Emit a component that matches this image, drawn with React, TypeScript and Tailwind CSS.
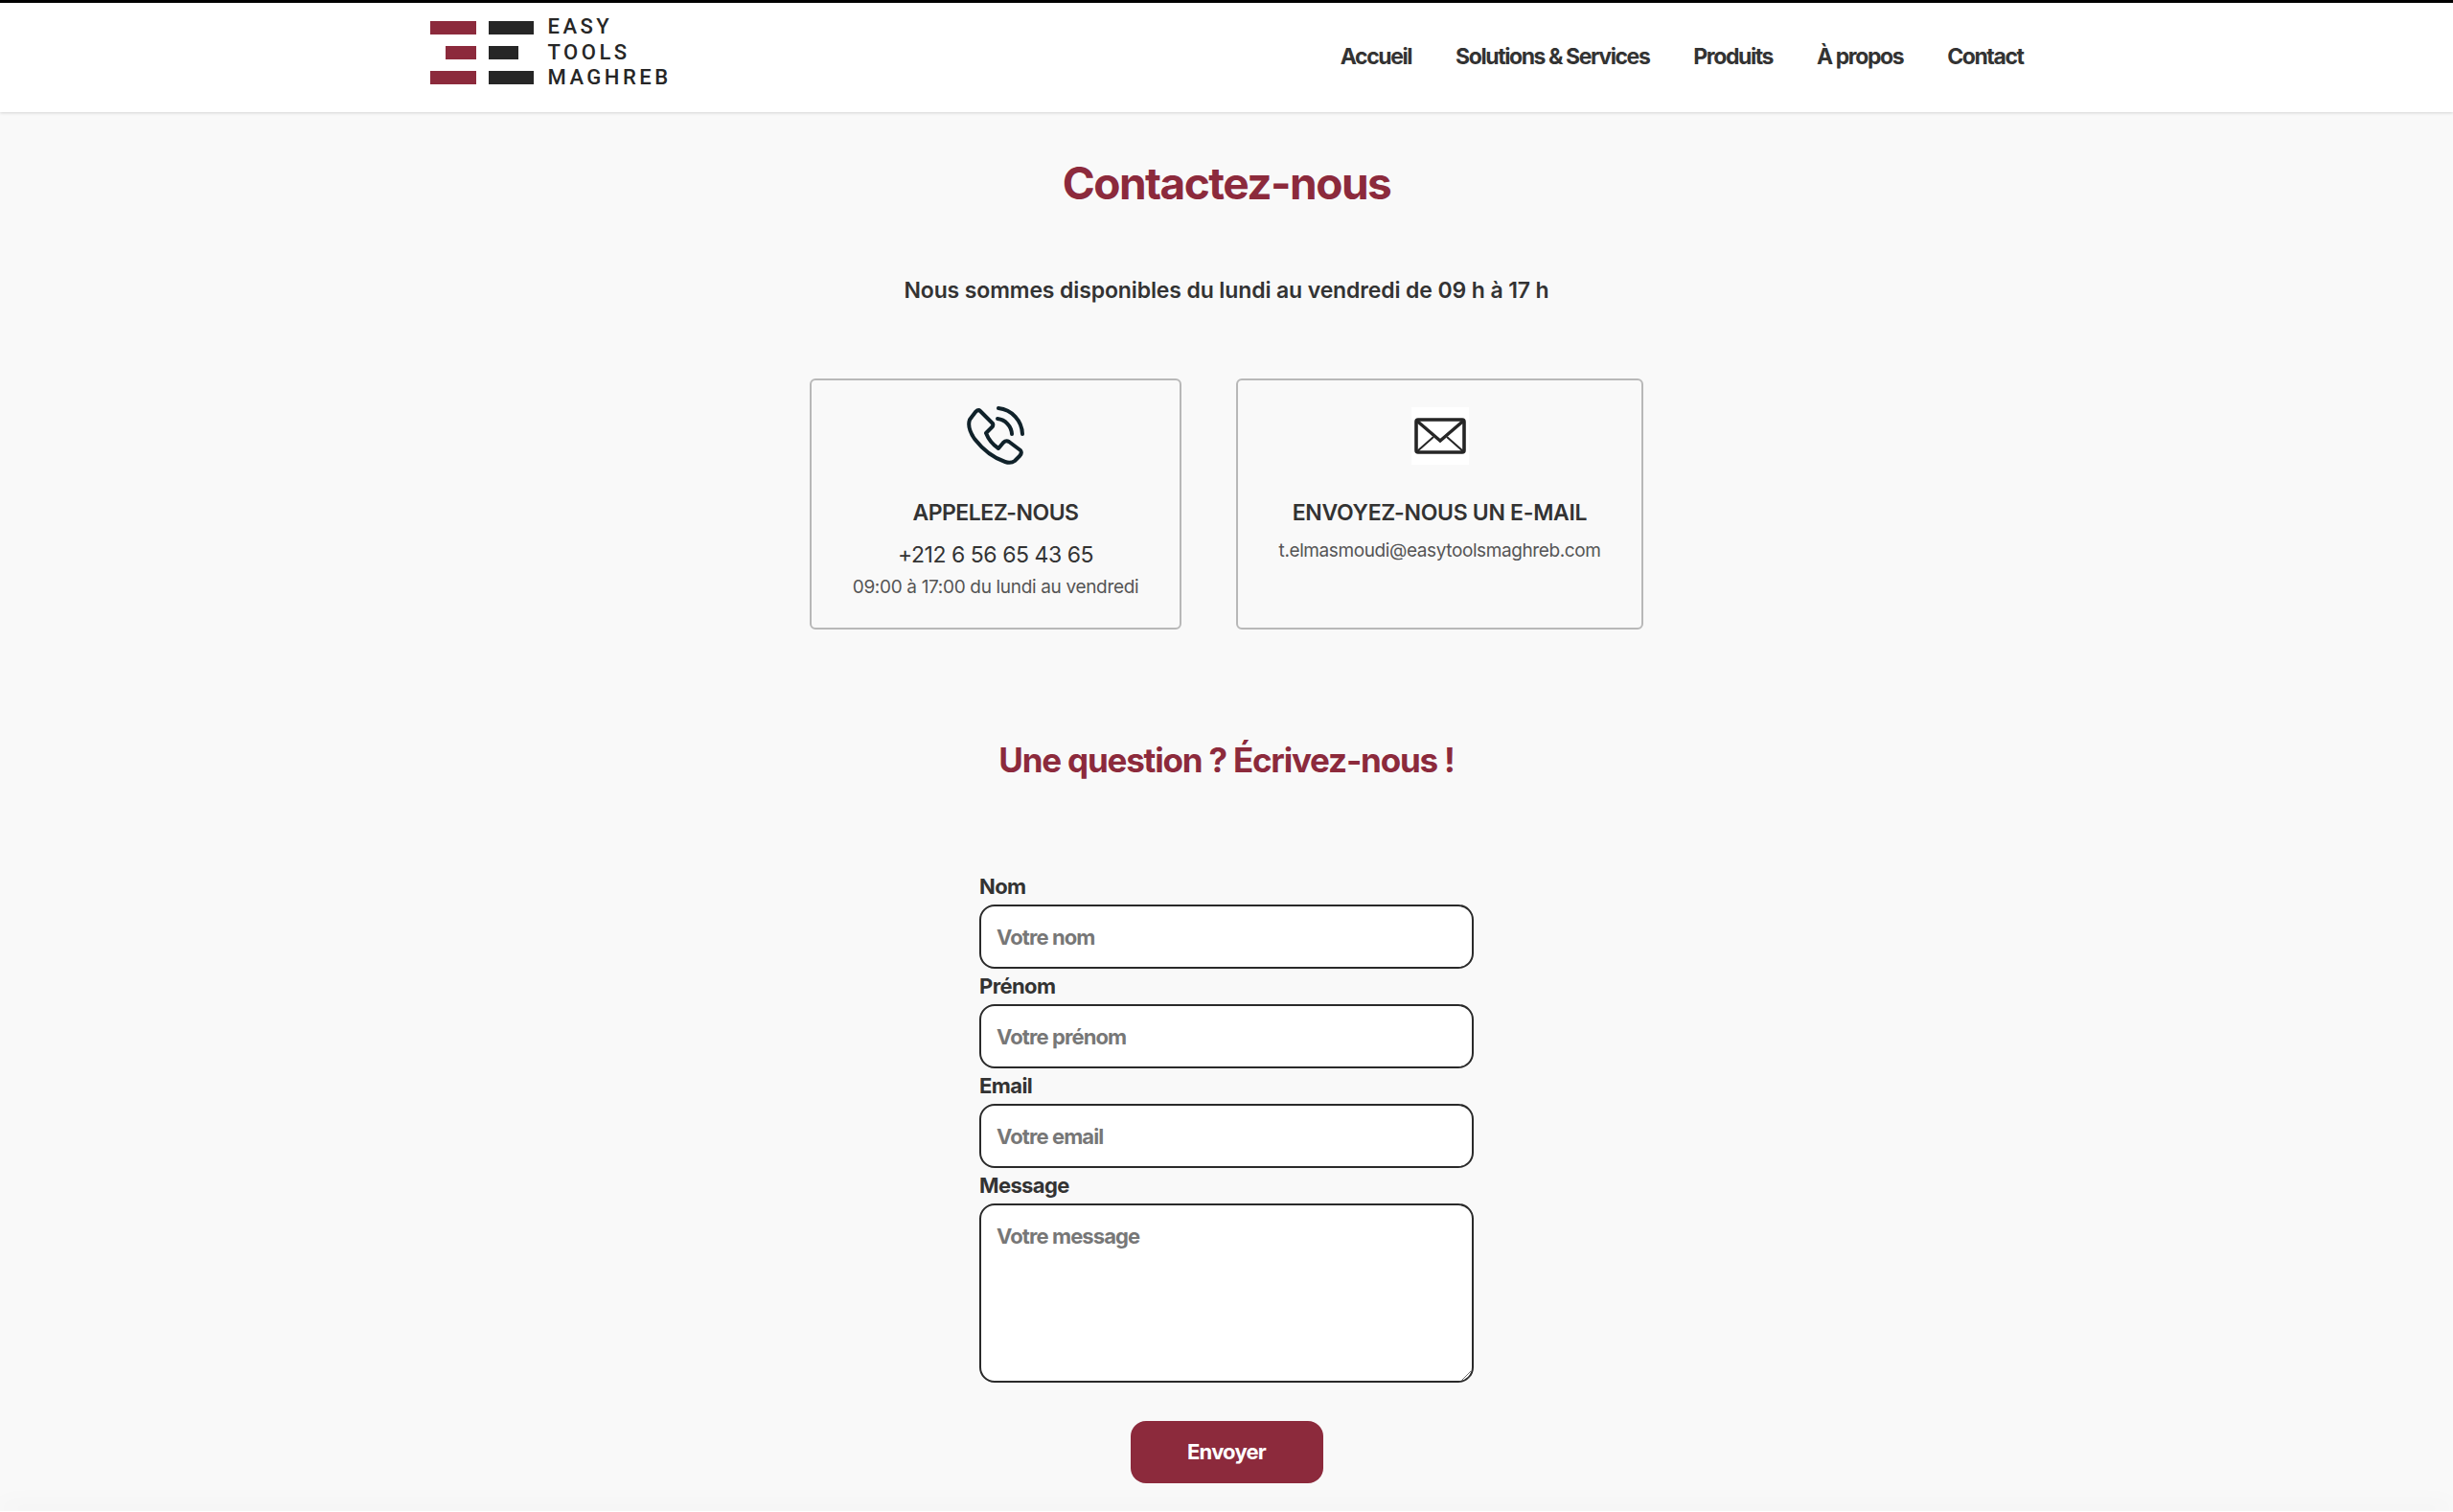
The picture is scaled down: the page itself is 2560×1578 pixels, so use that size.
const navLinks = ['Accueil', 'Solutions & Services', 'Produits', 'À propos', 'Contact'];

const fields = [
  { label: 'Nom', placeholder: 'Votre nom' },
  { label: 'Prénom', placeholder: 'Votre prénom' },
  { label: 'Email', placeholder: 'Votre email' },
];

function Logo() {
  return (
    <div className="flex items-center gap-[15px]">
      <div className="flex flex-col gap-[12px]">
        <div className="flex gap-[13px] justify-end">
          <div className="w-[48px] h-[14px] bg-[#8c2a3c]" />
          <div className="w-[47px] h-[14px] bg-[#262626]" />
        </div>
        <div className="flex gap-[13px] pl-[16px]">
          <div className="w-[32px] h-[14px] bg-[#8c2a3c]" />
          <div className="w-[31px] h-[14px] bg-[#262626]" />
        </div>
        <div className="flex gap-[13px]">
          <div className="w-[48px] h-[14px] bg-[#8c2a3c]" />
          <div className="w-[47px] h-[14px] bg-[#262626]" />
        </div>
      </div>
      <div className="flex flex-col font-['Roboto',sans-serif] font-medium text-[22px] leading-[26.5px] tracking-[3.5px] text-[#262626]">
        <span>EASY</span>
        <span>TOOLS</span>
        <span>MAGHREB</span>
      </div>
    </div>
  );
}

function PhoneIcon() {
  return (
    <svg width="60" height="61" viewBox="0 0 60 61" fill="none" stroke="#10222a" strokeWidth="4" strokeLinecap="round" strokeLinejoin="round">
      <path d="M14 5 L27 18 Q28 20 26 22 L20 28 Q24 38 33 44 L38 38 Q41 35 44 37 L56 46 Q58 49 55 52 L50 57 Q46 60 40 58 Q22 52 8 34 Q0 22 3 14 L9 6 Q12 3 14 5 Z" />
      <path d="M33 2 A28 28 0 0 1 58 29" />
      <path d="M32 13 A17 17 0 0 1 47 29" />
    </svg>
  );
}

function MailIcon() {
  return (
    <div className="w-[60px] h-[60px] bg-white flex items-center justify-center">
      <svg width="54" height="38" viewBox="0 0 54 38" fill="none" stroke="#262626">
        <rect x="2" y="2" width="50" height="34" rx="2" strokeWidth="3.6" />
        <path d="M2.5 3 L27 24 L51.5 3" strokeWidth="3.4" />
        <path d="M3 35 L20 20 M51 35 L34 20" strokeWidth="2" />
      </svg>
    </div>
  );
}

function App() {
  return (
    <div className="min-h-[1578px] bg-[#f9f9f9] font-['Inter',sans-serif] text-[#333333]">
      <header className="h-[117px] bg-white border-t-[3px] border-black shadow-[0_1px_3px_rgba(0,0,0,0.15)]">
        <div className="w-[1663px] mx-auto flex justify-between">
          <div className="pt-[12px]">
            <Logo />
          </div>
          <nav className="flex gap-[46px] pt-[41px] text-[23px] leading-[30px] font-bold tracking-[-1.42px]">
            {navLinks.map((link) => (
              <a key={link}>{link}</a>
            ))}
          </nav>
        </div>
      </header>

      <main className="flex flex-col items-center">
        <h1 className="mt-[44px] text-[46px] leading-[60px] font-bold tracking-[-1.5px] text-[#8c2a3c]">
          Contactez-nous
        </h1>
        <p className="mt-[67px] text-[23px] leading-[30px] font-semibold tracking-[-0.12px]">
          Nous sommes disponibles du lundi au vendredi de 09 h à 17 h
        </p>

        <div className="mt-[77px] flex gap-[57px]">
          <div className="w-[388px] h-[262px] rounded-[6px] border-2 border-[#b8b8b8] flex flex-col items-center pt-[27px]">
            <PhoneIcon />
            <h3 className="mt-[34px] text-[23px] leading-[32px] font-semibold tracking-[-0.5px]">APPELEZ-NOUS</h3>
            <p className="mt-[12px] text-[23px] leading-[32px] tracking-[-0.45px]">+212 6 56 65 43 65</p>
            <p className="mt-[4px] text-[19px] leading-[28px] tracking-[-0.33px] text-[#555555]">09:00 à 17:00 du lundi au vendredi</p>
          </div>
          <div className="w-[425px] h-[262px] rounded-[6px] border-2 border-[#b8b8b8] flex flex-col items-center pt-[28px]">
            <MailIcon />
            <h3 className="mt-[34px] text-[23px] leading-[32px] font-semibold tracking-[-0.3px]">ENVOYEZ-NOUS UN E-MAIL</h3>
            <p className="mt-[10px] text-[19px] leading-[28px] tracking-[-0.4px] text-[#555555]">t.elmasmoudi@easytoolsmaghreb.com</p>
          </div>
        </div>

        <h2 className="mt-[113px] text-[35px] leading-[46px] font-bold tracking-[-1.2px] text-[#8c2a3c]">
          Une question ? Écrivez-nous !
        </h2>

        <form className="mt-[91px] w-[516px] flex flex-col">
          {fields.map((field) => (
            <div key={field.label} className="flex flex-col">
              <label className="h-[37px] leading-[36px] text-[22px] font-bold tracking-[-0.6px]">{field.label}</label>
              <input
                placeholder={field.placeholder}
                className="h-[67px] rounded-[16px] border-2 border-[#2a2a2a] bg-white px-[16px] text-[22px] font-bold tracking-[-0.9px] placeholder:text-[#777777]"
              />
            </div>
          ))}
          <label className="h-[37px] leading-[36px] text-[22px] font-bold tracking-[-0.6px]">Message</label>
          <div className="relative flex">
            <textarea
              placeholder="Votre message"
              className="w-full h-[187px] rounded-[16px] border-2 border-[#2a2a2a] bg-white px-[16px] py-[17px] text-[22px] leading-[30px] font-bold tracking-[-0.9px] placeholder:text-[#777777] resize-none"
            />
            <svg className="absolute right-[2px] bottom-[2px]" width="11" height="11" viewBox="0 0 11 11" stroke="#777777" strokeWidth="1">
              <path d="M1 10 L10 1 M6 10 L10 6" />
            </svg>
          </div>
          <button
            type="button"
            className="mt-[40px] self-center w-[201px] h-[65px] rounded-[16px] bg-[#8c2a3c] text-white text-[22px] font-bold tracking-[-0.8px]"
          >
            Envoyer
          </button>
        </form>
      </main>
      <div className="mt-[29px] h-[3px] bg-white shadow-[0_-4px_24px_rgba(0,0,0,0.12)]" />
    </div>
  );
}

export default App;
